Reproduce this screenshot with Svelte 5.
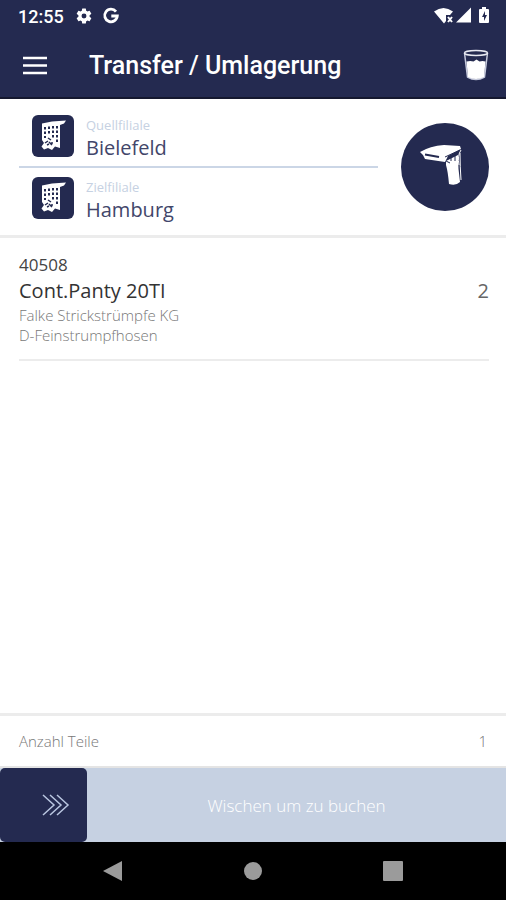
<script>
  const branches = [
    { id: 'source', label: 'Quellfiliale', name: 'Bielefeld' },
    { id: 'target', label: 'Zielfiliale', name: 'Hamburg' }
  ];
  const items = [
    { number: '40508', title: 'Cont.Panty 20TI', supplier: 'Falke Strickstrümpfe KG', group: 'D-Feinstrumpfhosen', amount: 2 }
  ];
  let swipe = $state(0);
</script>

{#snippet building()}
  <svg width="42" height="42" viewBox="0 0 42 42" aria-hidden="true">
    <path fill="#fff" d="M10 8.500 20 6.500 34 5.500 32 8.500 28 10V33L23 31.500 20 35 16 33 12 34.500 9.500 31.500 12 28 10 25Z" />
    <path fill="#242a50" d="M12 12h2v2.500h-2zM16 11.500h2V14h-2zM20 11h2v2.500h-2zM24 11h2v2.500h-2zM12 16.500h2V19h-2zM16 16h2v2.500h-2zM20 15.500h2V18h-2zM24 15.500h2V18h-2zM12 21h2v2h-2zM20 20h2v2.500h-2zM24 20h2v2.500h-2zM24 24.500h2V27h-2z" />
    <path fill="none" stroke="#242a50" stroke-width="1.500" d="m13 28 3-2M16 23l3 2M17 27l3 3M15 30l2-1M20 27v2" />
  </svg>
{/snippet}

<div class="screen">
  <div class="status">
    <span class="time">12:55</span>
    <svg width="18" height="18" viewBox="0 0 24 24" aria-hidden="true">
      <path fill="#fff" d="M19.430 12.980a7.800 7.800 0 0 0 0-1.960l2.110-1.650a.5.5 0 0 0 .12-.64l-2-3.460a.5.5 0 0 0-.61-.22l-2.490 1a7.300 7.300 0 0 0-1.690-.98l-.38-2.650A.5.5 0 0 0 14 2h-4a.5.5 0 0 0-.49.420l-.38 2.650c-.61.25-1.170.59-1.690.98l-2.490-1a.5.5 0 0 0-.61.220l-2 3.460a.5.5 0 0 0 .12.640l2.110 1.650a7.800 7.800 0 0 0 0 1.960l-2.110 1.650a.5.5 0 0 0-.12.640l2 3.460c.12.220.39.300.61.220l2.490-1c.52.400 1.080.730 1.690.980l.38 2.650c.03.240.24.420.49.420h4c.25 0 .46-.18.490-.42l.38-2.650c.61-.25 1.170-.59 1.690-.98l2.490 1c.23.090.49 0 .61-.22l2-3.460a.5.5 0 0 0-.12-.64ZM12 15.300a3.300 3.300 0 1 1 0-6.600 3.300 3.300 0 0 1 0 6.600Z" />
    </svg>
    <svg width="18" height="18" viewBox="0 0 18 18" aria-hidden="true">
      <path fill="none" stroke="#fff" stroke-width="2.800" d="M14 4.600A6.300 6.300 0 1 0 15.300 9H9.300" />
    </svg>
    <svg class="signals" width="58" height="20" viewBox="0 0 58 20" aria-hidden="true">
      <path fill="#fff" d="M0 5.500Q9.500-1.500 19 5.500L16 9h-4v6l-2 2.500Z" />
      <path fill="none" stroke="#fff" stroke-width="2" d="m14 11 4 5M18 11l-4 5" />
      <path fill="#fff" d="M37 1.500v15H22Z" />
      <path fill="#fff" fill-rule="evenodd" d="M48 1h4v2h2q1 0 1 1v12q0 1-1 1h-8q-1 0-1-1V4q0-1 1-1h2ZM51 5l-3 6h2v4l3-6H51Z" />
    </svg>
  </div>

  <header>
    <button class="menu" aria-label="Menü">
      <svg width="24" height="20" viewBox="0 0 24 20" aria-hidden="true"><path stroke="#fff" stroke-width="2.500" d="M0 2h24M0 9.500h24M0 17h24" /></svg>
    </button>
    <h1>Transfer / Umlagerung</h1>
    <button class="trash" aria-label="Liste leeren">
      <svg width="26" height="34" viewBox="0 0 26 34" aria-hidden="true">
        <path fill="none" stroke="#c5c9dc" stroke-width="1.500" d="m1.500 4 3 24q8.500 5 17 0L24.500 4" />
        <ellipse cx="13" cy="4" rx="11.500" ry="2.500" fill="none" stroke="#e8eaf2" stroke-width="1.500" />
        <path fill="#fff" d="M3.500 12.500q4-1 7 0l3-2 3 2q3-1 6 0l-1.500 15.500q-8 4-16 0Z" />
      </svg>
    </button>
  </header>

  <section class="transfer">
    <div class="branches">
      {#each branches as branch (branch.id)}
        <button class="branch">
          <span class="tile">{@render building()}</span>
          <span class="names"><span class="label">{branch.label}</span><span class="name">{branch.name}</span></span>
        </button>
      {/each}
    </div>
    <button class="scan" aria-label="Scannen">
      <svg width="88" height="88" viewBox="0 0 88 88" aria-hidden="true">
        <path fill="#fff" d="M19 29Q29 23 43 22L59 23 60 26 47 33 44 39 24 36 22 32Z" />
        <path fill="none" stroke="#242a50" stroke-width="2" d="M24 31.500 38 34" />
        <path fill="none" stroke="#242a50" stroke-width="1" d="m44 34 15-7" />
        <path fill="#fff" d="M45 38 57 32Q57 46 59 59 55 63 48 61 47 49 45 42Z" />
        <path fill="none" stroke="#fff" stroke-width="1" d="M59 30q0 14 1 27M60 27q-4 6-2 15" />
        <path fill="none" stroke="#242a50" stroke-width="1" d="m45 38 4 2M50 35v3M54 33v5" />
      </svg>
    </button>
  </section>

  <main>
    <ul>
      {#each items as item (item.number)}
        <li>
          <div>
            <p class="number">{item.number}</p>
            <h2>{item.title}</h2>
            <p class="detail">{item.supplier}</p>
            <p class="detail">{item.group}</p>
          </div>
          <span class="amount">{item.amount}</span>
        </li>
      {/each}
    </ul>
  </main>

  <div class="total"><span>Anzahl Teile</span><span>1</span></div>

  <div class="swipe">
    <div class="thumb" style:margin-left="{swipe * 0.82}%">
      <svg width="28" height="24" viewBox="0 0 28 24" aria-hidden="true"><path fill="none" stroke="#b9c6e0" stroke-width="1.500" d="m1 2 11 10L1 22M8 2l11 10L8 22M15 2l11 10-11 10" /></svg>
    </div>
    <label for="book">Wischen um zu buchen</label>
    <input id="book" type="range" min="0" max="100" bind:value={swipe} />
  </div>

  <nav>
    <button aria-label="Zurück"><svg width="20" height="20" viewBox="0 0 20 20"><path fill="#9b9b9b" d="M0 10 19 0v20Z" /></svg></button>
    <button aria-label="Startseite"><svg width="20" height="20" viewBox="0 0 20 20"><circle cx="10" cy="10" r="9" fill="#9b9b9b" /></svg></button>
    <button aria-label="Übersicht"><svg width="20" height="20" viewBox="0 0 20 20"><rect width="20" height="20" rx="1" fill="#9b9b9b" /></svg></button>
  </nav>
</div>

<style>
  :global(body) { margin: 0; }
  .screen {
    min-height: 100vh;
    display: flex;
    flex-direction: column;
    background: #fff;
    font-family: "Open Sans", "Noto Sans", sans-serif;
    font-weight: 300;
  }
  svg { display: block; flex: none; }
  button { margin: 0; padding: 0; border: 0; background: none; font: inherit; color: inherit; text-align: left; cursor: pointer; }
  h1, h2, p, ul { margin: 0; padding: 0; }
  .status {
    height: 32px;
    padding: 0 14px 0 18px;
    display: flex;
    align-items: center;
    gap: 9px;
    background: #242a50;
    color: #fff;
    font: 500 18px "Roboto", sans-serif;
  }
  .time { margin-right: 2px; }
  .signals { margin-left: auto; }
  header {
    height: 67px;
    padding: 2px 17px 0 23px;
    box-sizing: border-box;
    display: flex;
    align-items: center;
    background: #242a50;
    border-bottom: 2px solid #15182f;
    color: #fff;
  }
  h1 { margin-left: 42px; font: 500 25px "Roboto", sans-serif; }
  .trash { margin-left: auto; }
  .transfer {
    display: flex;
    align-items: center;
    padding: 7px 17px 7px 19px;
    border-bottom: 3px solid #ececec;
  }
  .branches { flex: 1; margin-right: 23px; }
  .branch { display: flex; width: 100%; padding: 9px 13px; gap: 12px; }
  .branch + .branch { border-top: 2px solid #cbd6e6; }
  .tile { border-radius: 6px; background: #242a50; }
  .names { display: flex; flex-direction: column; }
  .label { font-size: 13px; line-height: 20px; font-weight: 400; color: #c6d1e2; }
  .name { font-size: 20px; line-height: 26px; height: 22px; font-weight: 400; color: #42466a; }
  .scan { border-radius: 50%; background: #242a50; }
  main { flex: 1; padding: 0 17px 0 19px; }
  ul { list-style: none; }
  li { display: flex; align-items: center; justify-content: space-between; padding: 15px 0 14px; border-bottom: 2px solid #ececec; }
  .number { font-size: 17px; line-height: 24px; font-weight: 400; color: #444; }
  h2 { font-size: 20px; line-height: 28px; font-weight: 400; color: #333; }
  .detail { font-size: 15px; line-height: 20px; color: #777; }
  .amount { padding-bottom: 18px; font-size: 20px; font-weight: 400; color: #666; }
  .total {
    height: 50px;
    padding: 0 19px;
    display: flex;
    align-items: center;
    justify-content: space-between;
    border-top: 3px solid #ececec;
    border-bottom: 2px solid #e4e4e4;
    font-size: 15px;
    color: #777;
  }
  .swipe { position: relative; height: 74px; display: flex; background: #c6d1e2; color: #fff; }
  .thumb { width: 87px; flex: none; display: flex; align-items: center; justify-content: center; padding-left: 25px; box-sizing: border-box; border-radius: 5px; background: #242a50; }
  .swipe label { flex: 1; align-self: center; text-align: center; font-size: 17px; }
  .swipe input { position: absolute; inset: 0; width: 100%; height: 100%; margin: 0; opacity: 0; cursor: pointer; }
  nav { height: 58px; padding: 0 43px; display: flex; align-items: center; background: #000; }
  nav button { flex: 1; display: flex; justify-content: center; }
</style>
